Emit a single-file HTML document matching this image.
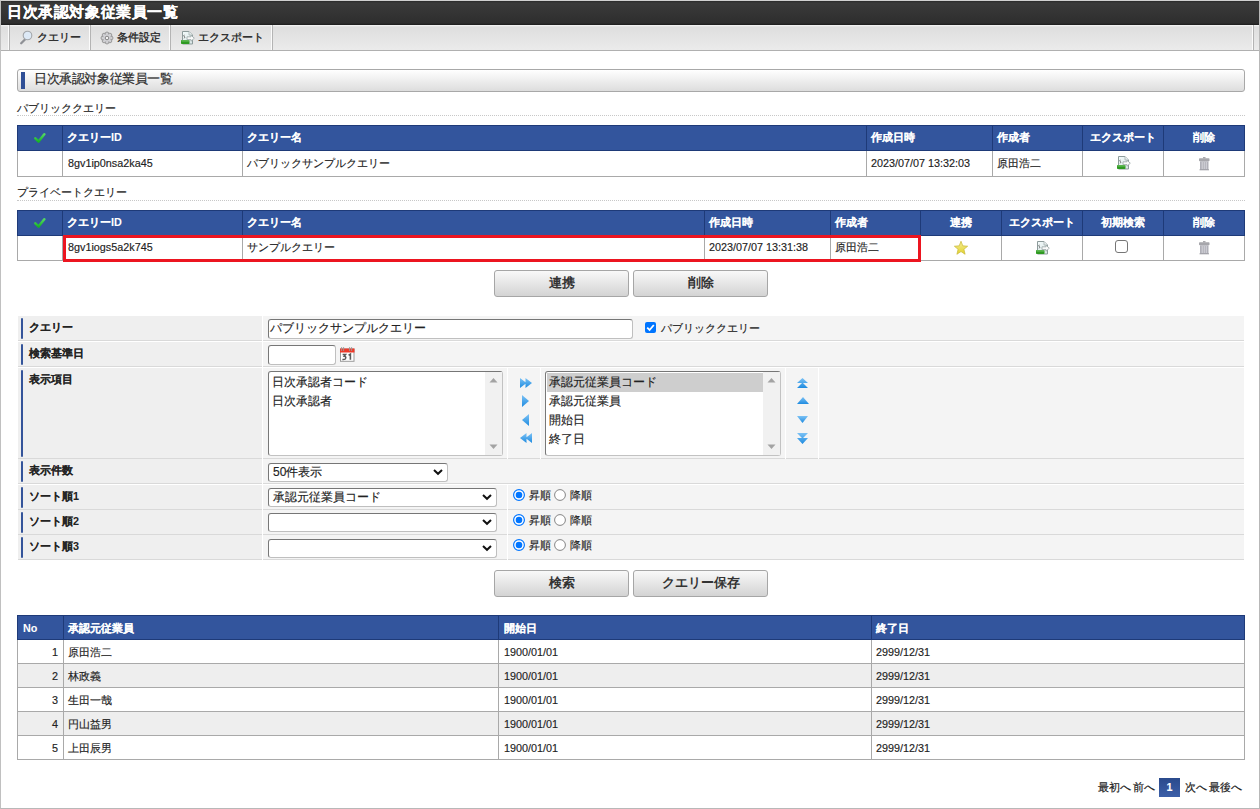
<!DOCTYPE html><html lang="ja"><head><meta charset="utf-8"><title>日次承認対象従業員一覧</title><style>
html,body{margin:0;padding:0;}
svg{display:block;}
body{width:1260px;height:809px;overflow:hidden;position:relative;background:#fff;font-family:"Liberation Sans",sans-serif;color:#222;}
.t{position:absolute;white-space:nowrap;font-size:10.8px;line-height:13px;-webkit-text-stroke-width:0.15px;}
.b{font-weight:bold;-webkit-text-stroke-width:0.05px;}
.w{color:#fff;}
.btn{position:absolute;box-sizing:border-box;border:1px solid #a6a6a6;border-radius:3px;background:linear-gradient(#f9f9f9,#d3d3d3);font-weight:bold;font-size:12.6px;color:#333;text-align:center;}
.inp{position:absolute;box-sizing:border-box;border:1px solid;border-color:#767676 #bfbfbf #bfbfbf #787878;border-radius:3px;background:#fff;}
.sel{position:absolute;box-sizing:border-box;border:1px solid;border-color:#767676 #bfbfbf #bfbfbf #787878;border-radius:3px;background:#fff;}
</style></head><body>
<div style="position:absolute;left:0px;top:0px;width:1258px;height:807px;border:1px solid #b8b8b8;border-top-color:#d0d0d0;border-left-color:#c0c0c0"></div>
<div style="position:absolute;left:1px;top:1px;width:1258px;height:24px;background:linear-gradient(#2a2a2a 0px,#3a3a3a 2px,#2e2e2e 22px,#1c1c1c 24px)"></div>
<div class="t b w" style="left:7px;top:5px;font-size:14.5px;line-height:15px;letter-spacing:0.6px;-webkit-text-stroke:0.25px #fff">日次承認対象従業員一覧</div>
<div style="position:absolute;left:1px;top:25px;width:1258px;height:25px;background:linear-gradient(#f6f6f6 0px,#dedede 2px,#ebebeb 25px)"></div>
<div style="position:absolute;left:1px;top:50px;width:1258px;height:1px;background:#b0b0b0"></div>
<div style="position:absolute;left:8px;top:25px;width:1px;height:25px;background:#fbfbfb"></div>
<div style="position:absolute;left:9px;top:25px;width:1px;height:25px;background:#b4b4b4"></div>
<div style="position:absolute;left:89px;top:25px;width:1px;height:25px;background:#fbfbfb"></div>
<div style="position:absolute;left:90px;top:25px;width:1px;height:25px;background:#b4b4b4"></div>
<div style="position:absolute;left:169px;top:25px;width:1px;height:25px;background:#fbfbfb"></div>
<div style="position:absolute;left:170px;top:25px;width:1px;height:25px;background:#b4b4b4"></div>
<div style="position:absolute;left:271px;top:25px;width:1px;height:25px;background:#fbfbfb"></div>
<div style="position:absolute;left:272px;top:25px;width:1px;height:25px;background:#b4b4b4"></div>
<div style="position:absolute;left:1252px;top:25px;width:1px;height:25px;background:#fbfbfb"></div>
<div style="position:absolute;left:1253px;top:25px;width:1px;height:25px;background:#b4b4b4"></div>
<div style="position:absolute;left:19px;top:30px;width:14px;height:15px;"><svg width="14" height="15" viewBox="0 0 14 15"><path d="M6.2 9.2 L2.2 13.2" stroke="#8f9196" stroke-width="2.3" stroke-linecap="round"/><circle cx="8.5" cy="5.5" r="4.3" fill="#dde9f6" stroke="#a3a6aa" stroke-width="1.1"/></svg></div>
<div class="t " style="left:37px;top:31px;-webkit-text-stroke-width:0.3px">クエリー</div>
<div style="position:absolute;left:100px;top:31px;width:14px;height:14px;"><svg width="14" height="14" viewBox="0 0 14 14"><g fill="#cfcfd2" stroke="#8a8a8a" stroke-width="0.8"><circle cx="11.10" cy="7.00" r="1.9"/><circle cx="9.90" cy="9.90" r="1.9"/><circle cx="7.00" cy="11.10" r="1.9"/><circle cx="4.10" cy="9.90" r="1.9"/><circle cx="2.90" cy="7.00" r="1.9"/><circle cx="4.10" cy="4.10" r="1.9"/><circle cx="7.00" cy="2.90" r="1.9"/><circle cx="9.90" cy="4.10" r="1.9"/></g><circle cx="7" cy="7" r="3.7" fill="#d2d2d6"/><circle cx="7" cy="7" r="1.8" fill="#f2f2f2" stroke="#7a7a7a" stroke-width="0.9"/></svg></div>
<div class="t " style="left:117px;top:31px;-webkit-text-stroke-width:0.3px">条件設定</div>
<div style="position:absolute;left:180px;top:30px;width:15px;height:15px;"><svg width="15" height="15" viewBox="0 0 15 15"><defs><linearGradient id="dg" x1="0" y1="0" x2="1" y2="1"><stop offset="0" stop-color="#f4fbfb"/><stop offset="1" stop-color="#d9e6e6"/></linearGradient></defs><path d="M2.5 1.5 H9 L12.5 5 V14 H2.5 Z" fill="url(#dg)" stroke="#8d9b9b" stroke-width="1"/><path d="M9 1.5 V5 H12.5" fill="#e9f0f0" stroke="#a5b0b0" stroke-width="0.8"/><rect x="1" y="10" width="8.5" height="4" rx="0.8" fill="#2f9a22"/><rect x="1.5" y="10.3" width="7.5" height="1.2" fill="#6cc060"/><path d="M7 6.8 H11 V5.2 L14.3 8.2 L11 11.2 V9.6 H7 Z" fill="#fbfbfb" stroke="#98a5a5" stroke-width="0.8"/><path d="M4.3 4.8 Q3.4 5.6 4.3 6.5 Q5.2 7.3 4.2 8.3" stroke="#555" stroke-width="0.9" fill="none"/></svg></div>
<div class="t " style="left:198px;top:31px;-webkit-text-stroke-width:0.3px">エクスポート</div>
<div style="position:absolute;left:17px;top:69px;width:1228px;height:23px;box-sizing:border-box;border:1px solid #a8a8a8;border-radius:3px;background:linear-gradient(#ffffff,#dddddd)"></div>
<div style="position:absolute;left:21px;top:72px;width:4px;height:17px;background:#2f4f96"></div>
<div class="t " style="left:34px;top:73px;font-size:12.6px;letter-spacing:-0.4px;color:#2a2a2a;-webkit-text-stroke:0.2px #2a2a2a">日次承認対象従業員一覧</div>
<div class="t " style="left:17px;top:102px;">パブリッククエリー</div>
<div style="position:absolute;left:17px;top:115px;width:1228px;height:1px;border-top:1px dotted #c8c8c8;height:0"></div>
<div style="position:absolute;left:17px;top:125px;width:1228px;height:26px;background:#33559d"></div>
<div style="position:absolute;left:17px;top:125px;width:1228px;height:1px;background:#1e3a78"></div>
<div style="position:absolute;left:17px;top:150px;width:1228px;height:1px;background:#1e3a78"></div>
<div style="position:absolute;left:17px;top:125px;width:1px;height:26px;background:#1e3a78"></div>
<div style="position:absolute;left:1244px;top:125px;width:1px;height:26px;background:#1e3a78"></div>
<div style="position:absolute;left:62px;top:125px;width:1px;height:26px;background:#1e3a78"></div>
<div style="position:absolute;left:242px;top:125px;width:1px;height:26px;background:#1e3a78"></div>
<div style="position:absolute;left:866px;top:125px;width:1px;height:26px;background:#1e3a78"></div>
<div style="position:absolute;left:992px;top:125px;width:1px;height:26px;background:#1e3a78"></div>
<div style="position:absolute;left:1082px;top:125px;width:1px;height:26px;background:#1e3a78"></div>
<div style="position:absolute;left:1163px;top:125px;width:1px;height:26px;background:#1e3a78"></div>
<div style="position:absolute;left:17px;top:151px;width:1228px;height:26px;background:#fff"></div>
<div style="position:absolute;left:17px;top:176px;width:1228px;height:1px;background:#a9a9a9"></div>
<div style="position:absolute;left:17px;top:151px;width:1px;height:26px;background:#a9a9a9"></div>
<div style="position:absolute;left:1244px;top:151px;width:1px;height:26px;background:#a9a9a9"></div>
<div style="position:absolute;left:62px;top:151px;width:1px;height:26px;background:#a9a9a9"></div>
<div style="position:absolute;left:242px;top:151px;width:1px;height:26px;background:#a9a9a9"></div>
<div style="position:absolute;left:866px;top:151px;width:1px;height:26px;background:#a9a9a9"></div>
<div style="position:absolute;left:992px;top:151px;width:1px;height:26px;background:#a9a9a9"></div>
<div style="position:absolute;left:1082px;top:151px;width:1px;height:26px;background:#a9a9a9"></div>
<div style="position:absolute;left:1163px;top:151px;width:1px;height:26px;background:#a9a9a9"></div>
<div style="position:absolute;left:34px;top:132px;width:13px;height:12px;"><svg width="13" height="12" viewBox="0 0 13 12"><defs><linearGradient id="cg" x1="0" y1="0" x2="0" y2="1"><stop offset="0" stop-color="#52d862"/><stop offset="1" stop-color="#17b425"/></linearGradient></defs><path d="M1.3 6.4 L4.6 9.6 L10.3 2.3" stroke="url(#cg)" stroke-width="2.5" fill="none" stroke-linecap="round" stroke-linejoin="round"/></svg></div>
<div class="t b w" style="left:67px;top:131px;">クエリーID</div>
<div class="t b w" style="left:247px;top:131px;">クエリー名</div>
<div class="t b w" style="left:871px;top:131px;">作成日時</div>
<div class="t b w" style="left:997px;top:131px;">作成者</div>
<div class="t b w" style="left:1082px;top:131px;width:81px;text-align:center;">エクスポート</div>
<div class="t b w" style="left:1163px;top:131px;width:81px;text-align:center;">削除</div>
<div class="t " style="left:68px;top:157px;">8gv1ip0nsa2ka45</div>
<div class="t " style="left:247px;top:157px;">パブリックサンプルクエリー</div>
<div class="t " style="left:871px;top:157px;">2023/07/07 13:32:03</div>
<div class="t " style="left:997px;top:157px;">原田浩二</div>
<div style="position:absolute;left:1116px;top:155px;width:15px;height:15px;"><svg width="15" height="15" viewBox="0 0 15 15"><defs><linearGradient id="dg" x1="0" y1="0" x2="1" y2="1"><stop offset="0" stop-color="#f4fbfb"/><stop offset="1" stop-color="#d9e6e6"/></linearGradient></defs><path d="M2.5 1.5 H9 L12.5 5 V14 H2.5 Z" fill="url(#dg)" stroke="#8d9b9b" stroke-width="1"/><path d="M9 1.5 V5 H12.5" fill="#e9f0f0" stroke="#a5b0b0" stroke-width="0.8"/><rect x="1" y="10" width="8.5" height="4" rx="0.8" fill="#2f9a22"/><rect x="1.5" y="10.3" width="7.5" height="1.2" fill="#6cc060"/><path d="M7 6.8 H11 V5.2 L14.3 8.2 L11 11.2 V9.6 H7 Z" fill="#fbfbfb" stroke="#98a5a5" stroke-width="0.8"/><path d="M4.3 4.8 Q3.4 5.6 4.3 6.5 Q5.2 7.3 4.2 8.3" stroke="#555" stroke-width="0.9" fill="none"/></svg></div>
<div style="position:absolute;left:1199px;top:157px;width:11px;height:14px;"><svg width="11" height="14" viewBox="0 0 11 14"><rect x="4" y="0" width="2.5" height="1.5" fill="#a9a9ae"/><rect x="0" y="1.3" width="10.5" height="3" rx="0.8" fill="#a6a6ab"/><path d="M1 4.3 H9.5 V13 H1 Z" fill="#b0b0b8"/><path d="M3.2 5 V12 M5.25 5 V12 M7.3 5 V12" stroke="#d4d4da" stroke-width="1"/><rect x="0.5" y="12.3" width="9.5" height="1" fill="#a0a0a6"/></svg></div>
<div class="t " style="left:17px;top:186px;">プライベートクエリー</div>
<div style="position:absolute;left:17px;top:200px;width:1228px;height:1px;border-top:1px dotted #c8c8c8;height:0"></div>
<div style="position:absolute;left:17px;top:210px;width:1228px;height:26px;background:#33559d"></div>
<div style="position:absolute;left:17px;top:210px;width:1228px;height:1px;background:#1e3a78"></div>
<div style="position:absolute;left:17px;top:235px;width:1228px;height:1px;background:#1e3a78"></div>
<div style="position:absolute;left:17px;top:210px;width:1px;height:26px;background:#1e3a78"></div>
<div style="position:absolute;left:1244px;top:210px;width:1px;height:26px;background:#1e3a78"></div>
<div style="position:absolute;left:62px;top:210px;width:1px;height:26px;background:#1e3a78"></div>
<div style="position:absolute;left:242px;top:210px;width:1px;height:26px;background:#1e3a78"></div>
<div style="position:absolute;left:704px;top:210px;width:1px;height:26px;background:#1e3a78"></div>
<div style="position:absolute;left:830px;top:210px;width:1px;height:26px;background:#1e3a78"></div>
<div style="position:absolute;left:920px;top:210px;width:1px;height:26px;background:#1e3a78"></div>
<div style="position:absolute;left:1001px;top:210px;width:1px;height:26px;background:#1e3a78"></div>
<div style="position:absolute;left:1082px;top:210px;width:1px;height:26px;background:#1e3a78"></div>
<div style="position:absolute;left:1163px;top:210px;width:1px;height:26px;background:#1e3a78"></div>
<div style="position:absolute;left:17px;top:236px;width:1228px;height:25px;background:#fff"></div>
<div style="position:absolute;left:17px;top:260px;width:1228px;height:1px;background:#a9a9a9"></div>
<div style="position:absolute;left:17px;top:236px;width:1px;height:25px;background:#a9a9a9"></div>
<div style="position:absolute;left:1244px;top:236px;width:1px;height:25px;background:#a9a9a9"></div>
<div style="position:absolute;left:62px;top:236px;width:1px;height:25px;background:#a9a9a9"></div>
<div style="position:absolute;left:242px;top:236px;width:1px;height:25px;background:#a9a9a9"></div>
<div style="position:absolute;left:704px;top:236px;width:1px;height:25px;background:#a9a9a9"></div>
<div style="position:absolute;left:830px;top:236px;width:1px;height:25px;background:#a9a9a9"></div>
<div style="position:absolute;left:920px;top:236px;width:1px;height:25px;background:#a9a9a9"></div>
<div style="position:absolute;left:1001px;top:236px;width:1px;height:25px;background:#a9a9a9"></div>
<div style="position:absolute;left:1082px;top:236px;width:1px;height:25px;background:#a9a9a9"></div>
<div style="position:absolute;left:1163px;top:236px;width:1px;height:25px;background:#a9a9a9"></div>
<div style="position:absolute;left:34px;top:217px;width:13px;height:12px;"><svg width="13" height="12" viewBox="0 0 13 12"><defs><linearGradient id="cg" x1="0" y1="0" x2="0" y2="1"><stop offset="0" stop-color="#52d862"/><stop offset="1" stop-color="#17b425"/></linearGradient></defs><path d="M1.3 6.4 L4.6 9.6 L10.3 2.3" stroke="url(#cg)" stroke-width="2.5" fill="none" stroke-linecap="round" stroke-linejoin="round"/></svg></div>
<div class="t b w" style="left:67px;top:216px;">クエリーID</div>
<div class="t b w" style="left:247px;top:216px;">クエリー名</div>
<div class="t b w" style="left:709px;top:216px;">作成日時</div>
<div class="t b w" style="left:835px;top:216px;">作成者</div>
<div class="t b w" style="left:920px;top:216px;width:81px;text-align:center;">連携</div>
<div class="t b w" style="left:1001px;top:216px;width:81px;text-align:center;">エクスポート</div>
<div class="t b w" style="left:1082px;top:216px;width:81px;text-align:center;">初期検索</div>
<div class="t b w" style="left:1163px;top:216px;width:81px;text-align:center;">削除</div>
<div class="t " style="left:68px;top:241px;">8gv1iogs5a2k745</div>
<div class="t " style="left:247px;top:241px;">サンプルクエリー</div>
<div class="t " style="left:709px;top:241px;">2023/07/07 13:31:38</div>
<div class="t " style="left:835px;top:241px;">原田浩二</div>
<div style="position:absolute;left:954px;top:241px;width:14px;height:14px;"><svg width="14" height="14" viewBox="0 0 15 15"><defs><linearGradient id="sg" x1="0" y1="0" x2="0" y2="1"><stop offset="0" stop-color="#f6ee9a"/><stop offset="1" stop-color="#e2d22a"/></linearGradient></defs><path d="M7.5 0.3 L9.4 5.2 L14.6 5.6 L10.6 8.9 L11.9 14.2 L7.5 11.3 L3.1 14.2 L4.4 8.9 L0.4 5.6 L5.6 5.2 Z" fill="url(#sg)" stroke="#cbbb3a" stroke-width="0.8" stroke-linejoin="round"/></svg></div>
<div style="position:absolute;left:1035px;top:240px;width:15px;height:15px;"><svg width="15" height="15" viewBox="0 0 15 15"><defs><linearGradient id="dg" x1="0" y1="0" x2="1" y2="1"><stop offset="0" stop-color="#f4fbfb"/><stop offset="1" stop-color="#d9e6e6"/></linearGradient></defs><path d="M2.5 1.5 H9 L12.5 5 V14 H2.5 Z" fill="url(#dg)" stroke="#8d9b9b" stroke-width="1"/><path d="M9 1.5 V5 H12.5" fill="#e9f0f0" stroke="#a5b0b0" stroke-width="0.8"/><rect x="1" y="10" width="8.5" height="4" rx="0.8" fill="#2f9a22"/><rect x="1.5" y="10.3" width="7.5" height="1.2" fill="#6cc060"/><path d="M7 6.8 H11 V5.2 L14.3 8.2 L11 11.2 V9.6 H7 Z" fill="#fbfbfb" stroke="#98a5a5" stroke-width="0.8"/><path d="M4.3 4.8 Q3.4 5.6 4.3 6.5 Q5.2 7.3 4.2 8.3" stroke="#555" stroke-width="0.9" fill="none"/></svg></div>
<div style="position:absolute;left:1115px;top:240px;width:13px;height:13px;"><svg width="13" height="13" viewBox="0 0 13 13"><rect x="0.5" y="0.5" width="12" height="12" rx="2.5" fill="#fff" stroke="#767676" stroke-width="1"/></svg></div>
<div style="position:absolute;left:1199px;top:241px;width:11px;height:14px;"><svg width="11" height="14" viewBox="0 0 11 14"><rect x="4" y="0" width="2.5" height="1.5" fill="#a9a9ae"/><rect x="0" y="1.3" width="10.5" height="3" rx="0.8" fill="#a6a6ab"/><path d="M1 4.3 H9.5 V13 H1 Z" fill="#b0b0b8"/><path d="M3.2 5 V12 M5.25 5 V12 M7.3 5 V12" stroke="#d4d4da" stroke-width="1"/><rect x="0.5" y="12.3" width="9.5" height="1" fill="#a0a0a6"/></svg></div>
<div style="position:absolute;left:63px;top:235px;width:858px;height:27px;box-sizing:border-box;border:3px solid #ec1520"></div>
<div class="btn" style="left:494px;top:270px;width:135px;height:27px;line-height:25px">連携</div>
<div class="btn" style="left:633px;top:270px;width:135px;height:27px;line-height:25px">削除</div>
<div style="position:absolute;left:18px;top:316px;width:244px;height:24px;background:#efefef"></div>
<div style="position:absolute;left:18px;top:340px;width:244px;height:1px;background:#d9d9d9"></div>
<div style="position:absolute;left:263px;top:316px;width:981px;height:24px;background:#f4f4f4"></div>
<div style="position:absolute;left:263px;top:340px;width:981px;height:1px;background:#d9d9d9"></div>
<div style="position:absolute;left:21px;top:318px;width:2px;height:21px;background:#34549a;border-radius:1px"></div>
<div class="t b" style="left:29px;top:321px;">クエリー</div>
<div style="position:absolute;left:18px;top:342px;width:244px;height:24px;background:#efefef"></div>
<div style="position:absolute;left:18px;top:366px;width:244px;height:1px;background:#d9d9d9"></div>
<div style="position:absolute;left:263px;top:342px;width:981px;height:24px;background:#f4f4f4"></div>
<div style="position:absolute;left:263px;top:366px;width:981px;height:1px;background:#d9d9d9"></div>
<div style="position:absolute;left:21px;top:344px;width:2px;height:21px;background:#34549a;border-radius:1px"></div>
<div class="t b" style="left:29px;top:347px;">検索基準日</div>
<div style="position:absolute;left:18px;top:368px;width:244px;height:90px;background:#efefef"></div>
<div style="position:absolute;left:18px;top:458px;width:244px;height:1px;background:#d9d9d9"></div>
<div style="position:absolute;left:263px;top:368px;width:981px;height:90px;background:#f4f4f4"></div>
<div style="position:absolute;left:263px;top:458px;width:981px;height:1px;background:#d9d9d9"></div>
<div style="position:absolute;left:21px;top:370px;width:2px;height:87px;background:#34549a;border-radius:1px"></div>
<div class="t b" style="left:29px;top:373px;">表示項目</div>
<div style="position:absolute;left:507px;top:368px;width:1px;height:91px;background:#ffffff"></div>
<div style="position:absolute;left:540px;top:368px;width:1px;height:91px;background:#ffffff"></div>
<div style="position:absolute;left:785px;top:368px;width:1px;height:91px;background:#ffffff"></div>
<div style="position:absolute;left:818px;top:368px;width:1px;height:91px;background:#ffffff"></div>
<div style="position:absolute;left:18px;top:459px;width:244px;height:24px;background:#efefef"></div>
<div style="position:absolute;left:18px;top:483px;width:244px;height:1px;background:#d9d9d9"></div>
<div style="position:absolute;left:263px;top:459px;width:981px;height:24px;background:#f4f4f4"></div>
<div style="position:absolute;left:263px;top:483px;width:981px;height:1px;background:#d9d9d9"></div>
<div style="position:absolute;left:21px;top:461px;width:2px;height:21px;background:#34549a;border-radius:1px"></div>
<div class="t b" style="left:29px;top:464px;">表示件数</div>
<div style="position:absolute;left:18px;top:485px;width:244px;height:24px;background:#efefef"></div>
<div style="position:absolute;left:18px;top:509px;width:244px;height:1px;background:#d9d9d9"></div>
<div style="position:absolute;left:263px;top:485px;width:981px;height:24px;background:#f4f4f4"></div>
<div style="position:absolute;left:263px;top:509px;width:981px;height:1px;background:#d9d9d9"></div>
<div style="position:absolute;left:21px;top:487px;width:2px;height:21px;background:#34549a;border-radius:1px"></div>
<div class="t b" style="left:29px;top:490px;">ソート順1</div>
<div style="position:absolute;left:507px;top:485px;width:1px;height:25px;background:#ffffff"></div>
<div style="position:absolute;left:18px;top:510px;width:244px;height:24px;background:#efefef"></div>
<div style="position:absolute;left:18px;top:534px;width:244px;height:1px;background:#d9d9d9"></div>
<div style="position:absolute;left:263px;top:510px;width:981px;height:24px;background:#f4f4f4"></div>
<div style="position:absolute;left:263px;top:534px;width:981px;height:1px;background:#d9d9d9"></div>
<div style="position:absolute;left:21px;top:512px;width:2px;height:21px;background:#34549a;border-radius:1px"></div>
<div class="t b" style="left:29px;top:515px;">ソート順2</div>
<div style="position:absolute;left:507px;top:510px;width:1px;height:25px;background:#ffffff"></div>
<div style="position:absolute;left:18px;top:535px;width:244px;height:24px;background:#efefef"></div>
<div style="position:absolute;left:18px;top:559px;width:244px;height:1px;background:#d9d9d9"></div>
<div style="position:absolute;left:263px;top:535px;width:981px;height:24px;background:#f4f4f4"></div>
<div style="position:absolute;left:263px;top:559px;width:981px;height:1px;background:#d9d9d9"></div>
<div style="position:absolute;left:21px;top:537px;width:2px;height:21px;background:#34549a;border-radius:1px"></div>
<div class="t b" style="left:29px;top:540px;">ソート順3</div>
<div style="position:absolute;left:507px;top:535px;width:1px;height:25px;background:#ffffff"></div>
<div style="position:absolute;left:268px;top:319px;width:365px;height:20px;box-sizing:border-box;border:1px solid;border-color:#767676 #bfbfbf #bfbfbf #787878;border-radius:3px;background:#fff"></div>
<div class="t " style="left:270px;top:322px;font-size:12px">パブリックサンプルクエリー</div>
<div style="position:absolute;left:645px;top:322px;width:11px;height:11px;background:#0075ff;border-radius:2px"><svg width="11" height="11" viewBox="0 0 11 11"><path d="M2.2 5.6 L4.6 8 L8.8 3" stroke="#fff" stroke-width="1.8" fill="none"/></svg></div>
<div class="t " style="left:661px;top:322px;">パブリッククエリー</div>
<div style="position:absolute;left:268px;top:345px;width:68px;height:20px;box-sizing:border-box;border:1px solid;border-color:#767676 #bfbfbf #bfbfbf #787878;border-radius:3px;background:#fff"></div>
<div style="position:absolute;left:340px;top:347px;width:15px;height:16px;"><svg width="15" height="16" viewBox="0 0 15 16"><rect x="0.5" y="2" width="13.5" height="12.3" fill="#fff" stroke="#9a9a9a" stroke-width="1"/><rect x="0" y="1.5" width="14.5" height="4" fill="#ee3a2a"/><path d="M1.6 0 V4 M3.6 0 V4 M9.6 0 V4 M11.6 0 V4" stroke="#9c9c9c" stroke-width="0.9"/><path d="M2.6 7.4 H5.6 L4.2 9.2 Q6 9.4 5.8 11 Q5.5 12.8 2.4 12.5" stroke="#5a5a5a" stroke-width="1.5" fill="none"/><path d="M8.6 8.2 L10.4 7.2 V12.8" stroke="#5a5a5a" stroke-width="1.6" fill="none"/></svg></div>
<div style="position:absolute;left:268px;top:371px;width:235px;height:85px;box-sizing:border-box;border:1px solid;border-color:#767676 #c2c2c2 #c2c2c2 #787878;border-radius:3px;background:#fff"></div>
<div style="position:absolute;left:485px;top:372px;width:17px;height:83px;background:#f1f1f1"></div>
<svg style="position:absolute;left:489px;top:377px" width="9" height="6"><path d="M0.5 5.5 L4.5 1 L8.5 5.5Z" fill="#a3a3a3"/></svg>
<svg style="position:absolute;left:489px;top:444px" width="9" height="6"><path d="M0.5 0.5 L4.5 5 L8.5 0.5Z" fill="#a3a3a3"/></svg>
<div class="t " style="left:272px;top:376px;font-size:12px">日次承認者コード</div>
<div class="t " style="left:272px;top:395px;font-size:12px">日次承認者</div>
<div style="position:absolute;left:545px;top:371px;width:236px;height:85px;box-sizing:border-box;border:1px solid;border-color:#767676 #c2c2c2 #c2c2c2 #787878;border-radius:3px;background:#fff"></div>
<div style="position:absolute;left:763px;top:372px;width:17px;height:83px;background:#f1f1f1"></div>
<svg style="position:absolute;left:767px;top:377px" width="9" height="6"><path d="M0.5 5.5 L4.5 1 L8.5 5.5Z" fill="#a3a3a3"/></svg>
<svg style="position:absolute;left:767px;top:444px" width="9" height="6"><path d="M0.5 0.5 L4.5 5 L8.5 0.5Z" fill="#a3a3a3"/></svg>
<div style="position:absolute;left:547px;top:373px;width:216px;height:19px;background:#cecece"></div>
<div class="t " style="left:549px;top:376px;font-size:12px">承認元従業員コード</div>
<div class="t " style="left:549px;top:395px;font-size:12px">承認元従業員</div>
<div class="t " style="left:549px;top:414px;font-size:12px">開始日</div>
<div class="t " style="left:549px;top:433px;font-size:12px">終了日</div>
<div style="position:absolute;left:520px;top:378px;width:12px;height:10px;"><svg width="12" height="10" viewBox="0 0 12 10"><defs><linearGradient id="agrr" x1="0" y1="0" x2="0" y2="1"><stop offset="0" stop-color="#7cc2f5"/><stop offset="1" stop-color="#1e8be0"/></linearGradient></defs><path d="M0 0 L6.5 5 L0 10Z M5.5 0 L12 5 L5.5 10Z" fill="url(#agrr)"/></svg></div>
<div style="position:absolute;left:522px;top:395px;width:7px;height:12px;"><svg width="7" height="12" viewBox="0 0 7 12"><defs><linearGradient id="agr" x1="0" y1="0" x2="0" y2="1"><stop offset="0" stop-color="#7cc2f5"/><stop offset="1" stop-color="#1e8be0"/></linearGradient></defs><path d="M0 0 L7 6 L0 12Z" fill="url(#agr)"/></svg></div>
<div style="position:absolute;left:522px;top:414px;width:7px;height:12px;"><svg width="7" height="12" viewBox="0 0 7 12"><defs><linearGradient id="agl" x1="0" y1="0" x2="0" y2="1"><stop offset="0" stop-color="#7cc2f5"/><stop offset="1" stop-color="#1e8be0"/></linearGradient></defs><path d="M7 0 L0 6 L7 12Z" fill="url(#agl)"/></svg></div>
<div style="position:absolute;left:520px;top:433px;width:12px;height:10px;"><svg width="12" height="10" viewBox="0 0 12 10"><defs><linearGradient id="agll" x1="0" y1="0" x2="0" y2="1"><stop offset="0" stop-color="#7cc2f5"/><stop offset="1" stop-color="#1e8be0"/></linearGradient></defs><path d="M12 0 L5.5 5 L12 10Z M6.5 0 L0 5 L6.5 10Z" fill="url(#agll)"/></svg></div>
<div style="position:absolute;left:797px;top:378px;width:11px;height:10px;"><svg width="11" height="10" viewBox="0 0 11 10"><defs><linearGradient id="aguu" x1="0" y1="0" x2="0" y2="1"><stop offset="0" stop-color="#7cc2f5"/><stop offset="1" stop-color="#1e8be0"/></linearGradient></defs><path d="M5.5 0 L11 5 H0Z M5.5 4.5 L11 10 H0Z" fill="url(#aguu)"/></svg></div>
<div style="position:absolute;left:797px;top:397px;width:12px;height:7px;"><svg width="12" height="7" viewBox="0 0 12 7"><defs><linearGradient id="agu" x1="0" y1="0" x2="0" y2="1"><stop offset="0" stop-color="#7cc2f5"/><stop offset="1" stop-color="#1e8be0"/></linearGradient></defs><path d="M6 0 L12 7 H0Z" fill="url(#agu)"/></svg></div>
<div style="position:absolute;left:797px;top:416px;width:11px;height:7px;"><svg width="11" height="7" viewBox="0 0 11 7"><defs><linearGradient id="agd" x1="0" y1="0" x2="0" y2="1"><stop offset="0" stop-color="#7cc2f5"/><stop offset="1" stop-color="#1e8be0"/></linearGradient></defs><path d="M0 0 H11 L5.5 7Z" fill="url(#agd)"/></svg></div>
<div style="position:absolute;left:797px;top:433px;width:11px;height:11px;"><svg width="11" height="11" viewBox="0 0 11 11"><defs><linearGradient id="agdd" x1="0" y1="0" x2="0" y2="1"><stop offset="0" stop-color="#7cc2f5"/><stop offset="1" stop-color="#1e8be0"/></linearGradient></defs><path d="M0 0 H11 L5.5 5.5Z M0 5 H11 L5.5 11Z" fill="url(#agdd)"/></svg></div>
<div style="position:absolute;left:268px;top:463px;width:180px;height:19px;box-sizing:border-box;border:1px solid;border-color:#767676 #bfbfbf #bfbfbf #787878;border-radius:3px;background:#fff"></div>
<div class="t " style="left:273px;top:466px;font-size:12px">50件表示</div>
<div style="position:absolute;left:433px;top:469px;width:11px;height:7px;line-height:0"><svg width="11" height="7" viewBox="0 0 11 7"><path d="M1 1 L5 4.8 L9 1" stroke="#111" stroke-width="2" fill="none"/></svg></div>
<div style="position:absolute;left:268px;top:488px;width:229px;height:19px;box-sizing:border-box;border:1px solid;border-color:#767676 #bfbfbf #bfbfbf #787878;border-radius:3px;background:#fff"></div>
<div class="t " style="left:273px;top:491px;font-size:12px">承認元従業員コード</div>
<div style="position:absolute;left:482px;top:494px;width:11px;height:7px;line-height:0"><svg width="11" height="7" viewBox="0 0 11 7"><path d="M1 1 L5 4.8 L9 1" stroke="#111" stroke-width="2" fill="none"/></svg></div>
<div style="position:absolute;left:268px;top:513px;width:229px;height:19px;box-sizing:border-box;border:1px solid;border-color:#767676 #bfbfbf #bfbfbf #787878;border-radius:3px;background:#fff"></div>
<div style="position:absolute;left:482px;top:519px;width:11px;height:7px;line-height:0"><svg width="11" height="7" viewBox="0 0 11 7"><path d="M1 1 L5 4.8 L9 1" stroke="#111" stroke-width="2" fill="none"/></svg></div>
<div style="position:absolute;left:268px;top:539px;width:229px;height:19px;box-sizing:border-box;border:1px solid;border-color:#767676 #bfbfbf #bfbfbf #787878;border-radius:3px;background:#fff"></div>
<div style="position:absolute;left:482px;top:545px;width:11px;height:7px;line-height:0"><svg width="11" height="7" viewBox="0 0 11 7"><path d="M1 1 L5 4.8 L9 1" stroke="#111" stroke-width="2" fill="none"/></svg></div>
<div style="position:absolute;left:513px;top:489px;width:12px;height:12px;"><svg width="12" height="12" viewBox="0 0 12 12"><circle cx="6" cy="6" r="5.4" fill="#fff" stroke="#0075ff" stroke-width="1.2"/><circle cx="6" cy="6" r="3.3" fill="#0075ff"/></svg></div>
<div class="t " style="left:529px;top:489px;">昇順</div>
<div style="position:absolute;left:554px;top:489px;width:12px;height:12px;"><svg width="12" height="12" viewBox="0 0 12 12"><circle cx="6" cy="6" r="5.4" fill="#fff" stroke="#858585" stroke-width="1"/></svg></div>
<div class="t " style="left:570px;top:489px;">降順</div>
<div style="position:absolute;left:513px;top:514px;width:12px;height:12px;"><svg width="12" height="12" viewBox="0 0 12 12"><circle cx="6" cy="6" r="5.4" fill="#fff" stroke="#0075ff" stroke-width="1.2"/><circle cx="6" cy="6" r="3.3" fill="#0075ff"/></svg></div>
<div class="t " style="left:529px;top:514px;">昇順</div>
<div style="position:absolute;left:554px;top:514px;width:12px;height:12px;"><svg width="12" height="12" viewBox="0 0 12 12"><circle cx="6" cy="6" r="5.4" fill="#fff" stroke="#858585" stroke-width="1"/></svg></div>
<div class="t " style="left:570px;top:514px;">降順</div>
<div style="position:absolute;left:513px;top:539px;width:12px;height:12px;"><svg width="12" height="12" viewBox="0 0 12 12"><circle cx="6" cy="6" r="5.4" fill="#fff" stroke="#0075ff" stroke-width="1.2"/><circle cx="6" cy="6" r="3.3" fill="#0075ff"/></svg></div>
<div class="t " style="left:529px;top:539px;">昇順</div>
<div style="position:absolute;left:554px;top:539px;width:12px;height:12px;"><svg width="12" height="12" viewBox="0 0 12 12"><circle cx="6" cy="6" r="5.4" fill="#fff" stroke="#858585" stroke-width="1"/></svg></div>
<div class="t " style="left:570px;top:539px;">降順</div>
<div class="btn" style="left:494px;top:570px;width:135px;height:27px;line-height:25px">検索</div>
<div class="btn" style="left:633px;top:570px;width:135px;height:27px;line-height:25px">クエリー保存</div>
<div style="position:absolute;left:17px;top:615px;width:1228px;height:25px;background:#33559d"></div>
<div style="position:absolute;left:17px;top:615px;width:1228px;height:1px;background:#1e3a78"></div>
<div style="position:absolute;left:17px;top:639px;width:1228px;height:1px;background:#1e3a78"></div>
<div style="position:absolute;left:17px;top:615px;width:1px;height:25px;background:#1e3a78"></div>
<div style="position:absolute;left:1244px;top:615px;width:1px;height:25px;background:#1e3a78"></div>
<div style="position:absolute;left:63px;top:615px;width:1px;height:25px;background:#1e3a78"></div>
<div style="position:absolute;left:498px;top:615px;width:1px;height:25px;background:#1e3a78"></div>
<div style="position:absolute;left:871px;top:615px;width:1px;height:25px;background:#1e3a78"></div>
<div style="position:absolute;left:17px;top:640px;width:1228px;height:24px;background:#fff"></div>
<div style="position:absolute;left:17px;top:663px;width:1228px;height:1px;background:#a9a9a9"></div>
<div style="position:absolute;left:17px;top:640px;width:1px;height:24px;background:#a9a9a9"></div>
<div style="position:absolute;left:1244px;top:640px;width:1px;height:24px;background:#a9a9a9"></div>
<div style="position:absolute;left:63px;top:640px;width:1px;height:24px;background:#a9a9a9"></div>
<div style="position:absolute;left:498px;top:640px;width:1px;height:24px;background:#a9a9a9"></div>
<div style="position:absolute;left:871px;top:640px;width:1px;height:24px;background:#a9a9a9"></div>
<div style="position:absolute;left:17px;top:664px;width:1228px;height:24px;background:#eeeeee"></div>
<div style="position:absolute;left:17px;top:687px;width:1228px;height:1px;background:#a9a9a9"></div>
<div style="position:absolute;left:17px;top:664px;width:1px;height:24px;background:#a9a9a9"></div>
<div style="position:absolute;left:1244px;top:664px;width:1px;height:24px;background:#a9a9a9"></div>
<div style="position:absolute;left:63px;top:664px;width:1px;height:24px;background:#a9a9a9"></div>
<div style="position:absolute;left:498px;top:664px;width:1px;height:24px;background:#a9a9a9"></div>
<div style="position:absolute;left:871px;top:664px;width:1px;height:24px;background:#a9a9a9"></div>
<div style="position:absolute;left:17px;top:688px;width:1228px;height:24px;background:#fff"></div>
<div style="position:absolute;left:17px;top:711px;width:1228px;height:1px;background:#a9a9a9"></div>
<div style="position:absolute;left:17px;top:688px;width:1px;height:24px;background:#a9a9a9"></div>
<div style="position:absolute;left:1244px;top:688px;width:1px;height:24px;background:#a9a9a9"></div>
<div style="position:absolute;left:63px;top:688px;width:1px;height:24px;background:#a9a9a9"></div>
<div style="position:absolute;left:498px;top:688px;width:1px;height:24px;background:#a9a9a9"></div>
<div style="position:absolute;left:871px;top:688px;width:1px;height:24px;background:#a9a9a9"></div>
<div style="position:absolute;left:17px;top:712px;width:1228px;height:24px;background:#eeeeee"></div>
<div style="position:absolute;left:17px;top:735px;width:1228px;height:1px;background:#a9a9a9"></div>
<div style="position:absolute;left:17px;top:712px;width:1px;height:24px;background:#a9a9a9"></div>
<div style="position:absolute;left:1244px;top:712px;width:1px;height:24px;background:#a9a9a9"></div>
<div style="position:absolute;left:63px;top:712px;width:1px;height:24px;background:#a9a9a9"></div>
<div style="position:absolute;left:498px;top:712px;width:1px;height:24px;background:#a9a9a9"></div>
<div style="position:absolute;left:871px;top:712px;width:1px;height:24px;background:#a9a9a9"></div>
<div style="position:absolute;left:17px;top:736px;width:1228px;height:24px;background:#fff"></div>
<div style="position:absolute;left:17px;top:759px;width:1228px;height:1px;background:#a9a9a9"></div>
<div style="position:absolute;left:17px;top:736px;width:1px;height:24px;background:#a9a9a9"></div>
<div style="position:absolute;left:1244px;top:736px;width:1px;height:24px;background:#a9a9a9"></div>
<div style="position:absolute;left:63px;top:736px;width:1px;height:24px;background:#a9a9a9"></div>
<div style="position:absolute;left:498px;top:736px;width:1px;height:24px;background:#a9a9a9"></div>
<div style="position:absolute;left:871px;top:736px;width:1px;height:24px;background:#a9a9a9"></div>
<div class="t b w" style="left:23px;top:622px;">No</div>
<div class="t b w" style="left:68px;top:622px;">承認元従業員</div>
<div class="t b w" style="left:504px;top:622px;">開始日</div>
<div class="t b w" style="left:876px;top:622px;">終了日</div>
<div class="t " style="left:17px;top:646px;width:41px;text-align:right;">1</div>
<div class="t " style="left:68px;top:646px;">原田浩二</div>
<div class="t " style="left:504px;top:646px;">1900/01/01</div>
<div class="t " style="left:876px;top:646px;">2999/12/31</div>
<div class="t " style="left:17px;top:670px;width:41px;text-align:right;">2</div>
<div class="t " style="left:68px;top:670px;">林政義</div>
<div class="t " style="left:504px;top:670px;">1900/01/01</div>
<div class="t " style="left:876px;top:670px;">2999/12/31</div>
<div class="t " style="left:17px;top:694px;width:41px;text-align:right;">3</div>
<div class="t " style="left:68px;top:694px;">生田一哉</div>
<div class="t " style="left:504px;top:694px;">1900/01/01</div>
<div class="t " style="left:876px;top:694px;">2999/12/31</div>
<div class="t " style="left:17px;top:718px;width:41px;text-align:right;">4</div>
<div class="t " style="left:68px;top:718px;">円山益男</div>
<div class="t " style="left:504px;top:718px;">1900/01/01</div>
<div class="t " style="left:876px;top:718px;">2999/12/31</div>
<div class="t " style="left:17px;top:742px;width:41px;text-align:right;">5</div>
<div class="t " style="left:68px;top:742px;">上田辰男</div>
<div class="t " style="left:504px;top:742px;">1900/01/01</div>
<div class="t " style="left:876px;top:742px;">2999/12/31</div>
<div class="t " style="left:1098px;top:781px;-webkit-text-stroke:0.2px #222">最初へ</div>
<div class="t " style="left:1133px;top:781px;-webkit-text-stroke:0.2px #222">前へ</div>
<div style="position:absolute;left:1159px;top:778px;width:21px;height:19px;background:linear-gradient(#2a4a8c,#3c5fa8)"></div>
<div class="t b w" style="left:1159px;top:781px;width:21px;text-align:center;">1</div>
<div class="t " style="left:1185px;top:781px;-webkit-text-stroke:0.2px #222">次へ</div>
<div class="t " style="left:1209px;top:781px;-webkit-text-stroke:0.2px #222">最後へ</div>
</body></html>
